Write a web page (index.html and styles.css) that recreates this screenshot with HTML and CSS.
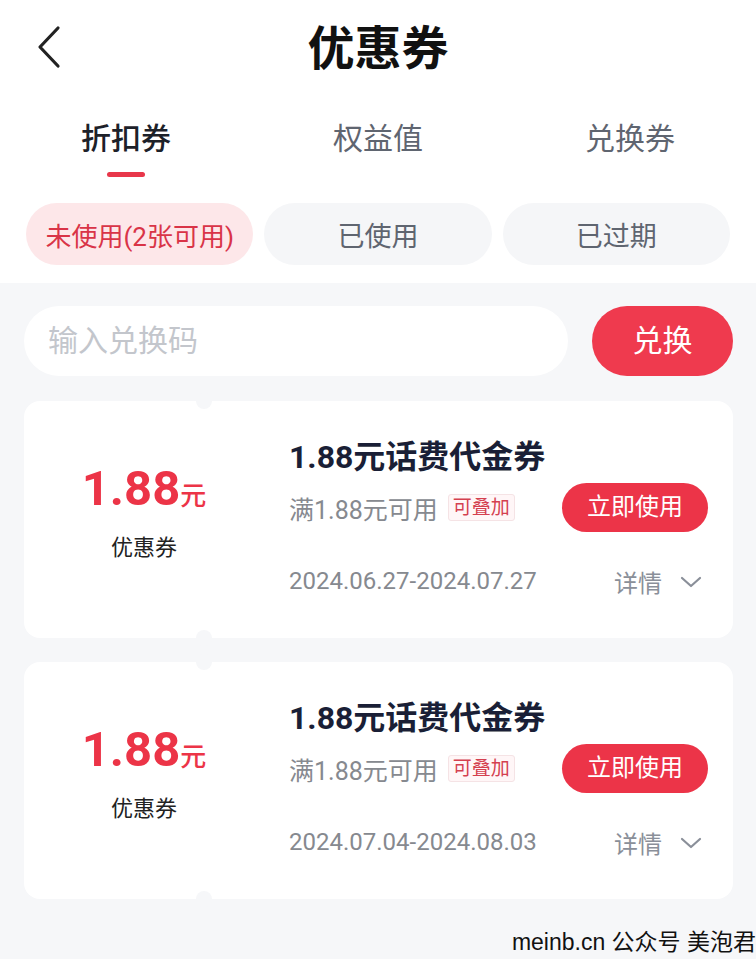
FILE: index.html
```html
<!DOCTYPE html>
<html lang="zh-CN">
  <head>
    <meta charset="utf-8">
    <title>优惠券</title>
    <link rel="stylesheet" href="styles.css">
  </head>
  <body>
    <div class="top">
      <div class="header">
        <svg class="back" width="26" height="44" viewBox="0 0 26 44">
          <path d="M22 3 L4 22 L22 41" fill="none" stroke="#222" stroke-width="3.2" stroke-linecap="round" stroke-linejoin="round"/>
        </svg>
        <h1 class="title">优惠券</h1>
      </div>

      <div class="tabs">
        <div class="tab active">折扣券<span class="bar"></span></div>
        <div class="tab">权益值</div>
        <div class="tab">兑换券</div>
      </div>

      <div class="chips">
        <div class="chip on">未使用(2张可用)</div>
        <div class="chip">已使用</div>
        <div class="chip">已过期</div>
      </div>
    </div>

    <div class="main">
      <div class="redeem">
        <div class="code-input">输入兑换码</div>
        <div class="redeem-btn">兑换</div>
      </div>

      <div class="card">
        <span class="notch notch-top"></span>
        <span class="notch notch-bottom"></span>
        <div class="card-left">
          <div class="amount"><b>1.88</b><small>元</small></div>
          <div class="kind">优惠券</div>
        </div>
        <div class="card-right">
          <div class="card-title">1.88元话费代金券</div>
          <div class="row">
            <div class="cond">满1.88元可用 <span class="tag">可叠加</span></div>
            <div class="use-btn">立即使用</div>
          </div>
          <div class="row date-row">
            <div class="date">2024.06.27-2024.07.27</div>
            <div class="more">详情
              <svg width="22" height="14" viewBox="0 0 22 14"><path d="M2 3 L11 11 L20 3" fill="none" stroke="#8a8f99" stroke-width="2.2" stroke-linecap="round" stroke-linejoin="round"/></svg>
            </div>
          </div>
        </div>
      </div>

      <div class="card">
        <span class="notch notch-top"></span>
        <span class="notch notch-bottom"></span>
        <div class="card-left">
          <div class="amount"><b>1.88</b><small>元</small></div>
          <div class="kind">优惠券</div>
        </div>
        <div class="card-right">
          <div class="card-title">1.88元话费代金券</div>
          <div class="row">
            <div class="cond">满1.88元可用 <span class="tag">可叠加</span></div>
            <div class="use-btn">立即使用</div>
          </div>
          <div class="row date-row">
            <div class="date">2024.07.04-2024.08.03</div>
            <div class="more">详情
              <svg width="22" height="14" viewBox="0 0 22 14"><path d="M2 3 L11 11 L20 3" fill="none" stroke="#8a8f99" stroke-width="2.2" stroke-linecap="round" stroke-linejoin="round"/></svg>
            </div>
          </div>
        </div>
      </div>

      <div class="mark">meinb.cn 公众号 美泡君</div>
    </div>
  </body>
</html>
```

FILE: styles.css
```css
/* coupon page */
body {
  margin: 0;
  width: 756px;
  height: 959px;
  overflow: hidden;
  background: #f6f7f9;
  font-family: Roboto, "Noto Sans CJK SC", sans-serif;
  color: #1d2129;
}
.top {
  background: #fff;
  padding-bottom: 18px;
}
.header {
  height: 98px;
  display: flex;
  align-items: center;
  justify-content: center;
  position: relative;
}
.back {
  position: absolute;
  left: 36px;
  top: 25px;
}
.title {
  margin: 0;
  font-size: 47px;
  font-weight: 700;
  color: #111;
  line-height: 1;
  padding-bottom: 2px;
}
.tabs {
  display: grid;
  grid-template-columns: repeat(3, 1fr);
  height: 88px;
}
.tab {
  position: relative;
  text-align: center;
  font-size: 30px;
  color: #5f6570;
  padding-top: 21px;
  line-height: 40px;
}
.tab.active {
  color: #1d2129;
  font-weight: 500;
}
.tab .bar {
  position: absolute;
  left: 50%;
  top: 74px;
  width: 38px;
  height: 5px;
  margin-left: -19px;
  border-radius: 3px;
  background: #e8374a;
}
/* filter chips */
.chips {
  display: flex;
  gap: 11px;
  padding: 17px 26px 0;
}
.chip {
  flex: 1;
  height: 62px;
  border-radius: 31px;
  background: #f5f6f8;
  color: #5f6570;
  font-size: 27px;
  display: flex;
  align-items: center;
  justify-content: center;
}
.chip.on {
  background: #fde7e9;
  color: #d93447;
  font-size: 26px;
}
.main {
  padding: 23px 23px 0 24px;
}
.redeem {
  display: flex;
  gap: 24px;
  margin-bottom: 25px;
}
.code-input {
  flex: 1;
  height: 70px;
  border-radius: 35px;
  background: #fff;
  color: #c3c6cc;
  font-size: 30px;
  line-height: 70px;
  padding-left: 24px;
}
.redeem-btn {
  width: 141px;
  height: 70px;
  border-radius: 35px;
  background: #ef3a4e;
  color: #fff;
  font-size: 30px;
  line-height: 70px;
  text-align: center;
}
/* coupon card */
.card {
  position: relative;
  display: flex;
  background: #fff;
  border-radius: 16px;
  height: 237px;
  margin-bottom: 24px;
}
.notch {
  position: absolute;
  left: 172px;
  width: 16px;
  height: 16px;
  border-radius: 50%;
  background: #f6f7f9;
}
.notch-top { top: -8px; }
.notch-bottom { bottom: -8px; }
.card-left {
  width: 240px;
  display: flex;
  flex-direction: column;
  align-items: center;
  justify-content: center;
  padding-bottom: 14px;
}
.amount {
  color: #ec3447;
  line-height: 1;
  white-space: nowrap;
}
.amount b {
  font-size: 49px;
  font-weight: 700;
}
.amount small {
  font-size: 26px;
  font-weight: 500;
}
.kind {
  font-size: 22px;
  margin-top: 16px;
  color: #222;
}
.card-right {
  flex: 1;
  padding: 36px 25px 0 25px;
}
.card-title {
  font-size: 32px;
  font-weight: 700;
  line-height: 40px;
  color: #1a1f36;
}
.row {
  display: flex;
  justify-content: space-between;
  align-items: center;
  margin-top: 6px;
}
.cond {
  font-size: 25px;
  color: #86898f;
  display: flex;
  align-items: center;
  gap: 10px;
}
.tag {
  font-size: 19px;
  color: #d4404f;
  background: #fff6f7;
  border: 1px solid #f5e3e5;
  border-radius: 3px;
  padding: 0 4px;
  line-height: 25px;
}
.use-btn {
  width: 146px;
  height: 49px;
  border-radius: 25px;
  background: #ec3448;
  color: #fff;
  font-size: 24px;
  line-height: 49px;
  text-align: center;
}
.date-row {
  margin-top: 32px;
  align-items: flex-end;
}
.date {
  font-size: 24px;
  color: #86898f;
}
.more {
  font-size: 24px;
  color: #8a8f99;
  display: flex;
  align-items: center;
  gap: 18px;
  padding-right: 6px;
  margin-bottom: -4px;
}
.mark {
  text-align: right;
  font-size: 23px;
  color: #111;
  margin-right: -23px;
  margin-top: 20px;
  font-family: "Liberation Sans", "Noto Sans CJK SC", sans-serif;
}
```
